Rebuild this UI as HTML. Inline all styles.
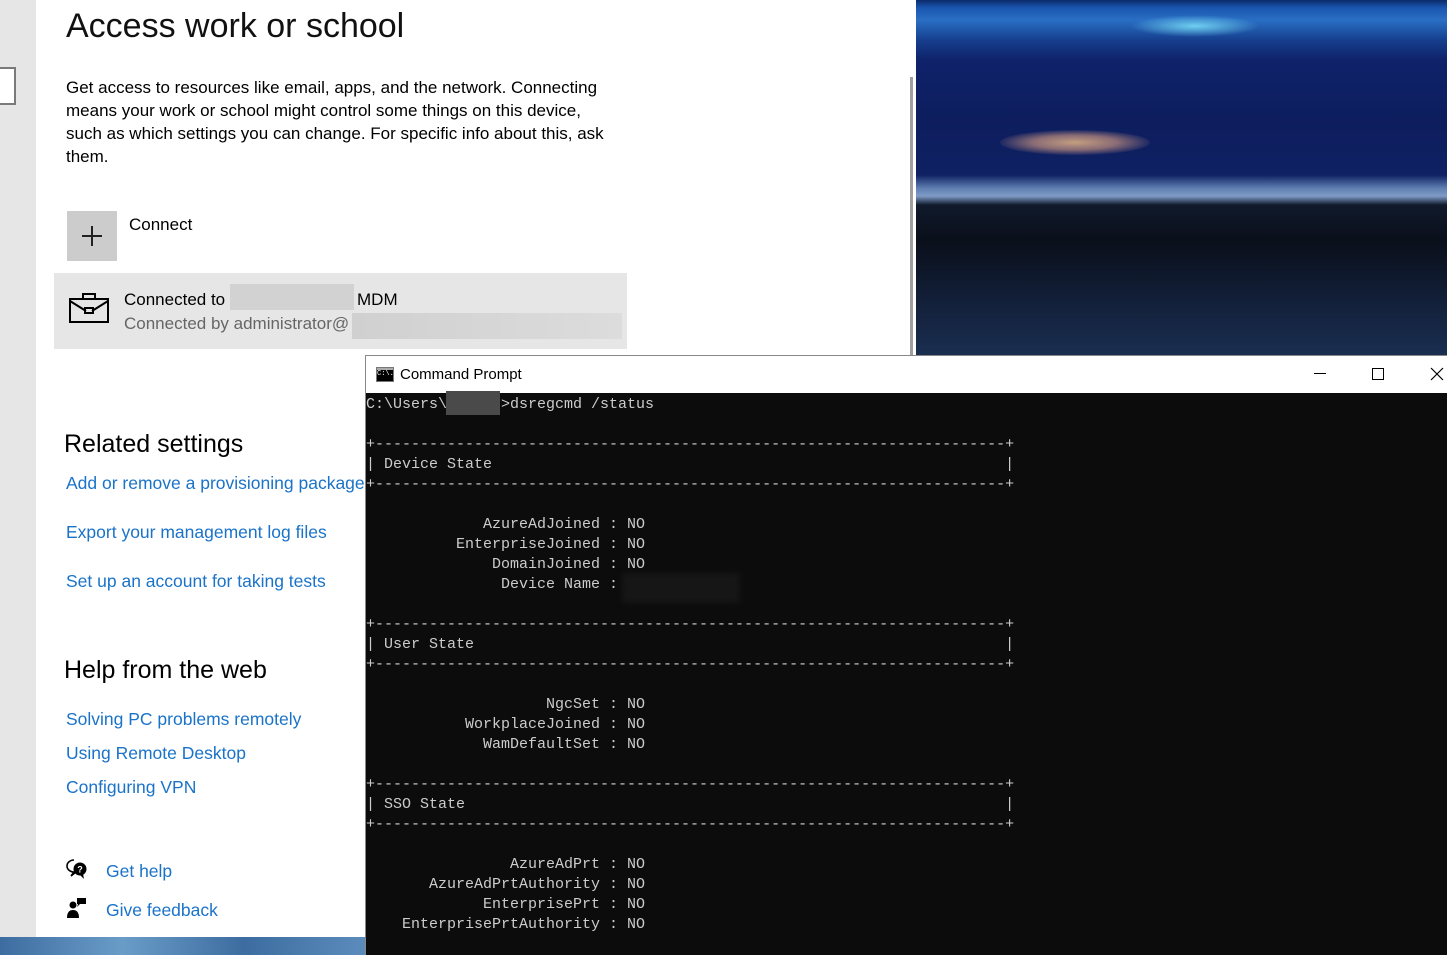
<!DOCTYPE html>
<html><head><meta charset="utf-8"><style>
*{margin:0;padding:0;box-sizing:border-box}
body{width:1447px;height:955px;overflow:hidden;position:relative;background:#fff;font-family:"Liberation Sans",sans-serif}
.abs{position:absolute}
.link{color:#1a73c9;font-size:17.5px;position:absolute;white-space:nowrap}
.mono{font-family:"Liberation Mono",monospace;font-size:15px;line-height:20px;color:#cccccc;white-space:pre}
</style></head><body>
<div class="abs" style="left:0;top:0;width:36px;height:937px;background:#e6e6e6"></div>
<div class="abs" style="left:-10px;top:67px;width:26px;height:38px;border:2px solid #7a7a7a;background:#fff"></div>
<div class="abs" style="left:916px;top:0;width:531px;height:355px;background:
linear-gradient(180deg,#0b2a6a 0,#1a56b0 8px,#2a6fc4 20px,#163f8e 40px,#0f226a 60px,#0d1d5e 120px,#0f2162 175px,#5d7eb0 188px,#7f9cc7 196px,#101a2c 205px,#0a0f1a 240px,#121f38 300px,#1a2e50 355px)"></div>
<div class="abs" style="left:1000px;top:130px;width:150px;height:25px;border-radius:50%;background:radial-gradient(ellipse,#c49e80 0,#8a6c75 40%,rgba(20,35,100,0) 75%)"></div>
<div class="abs" style="left:1130px;top:15px;width:130px;height:22px;border-radius:50%;background:radial-gradient(ellipse,#6fd0f0 0,rgba(40,120,200,0) 70%)"></div>
<div class="abs" style="left:910px;top:77px;width:3px;height:278px;background:#a0a0a0"></div>
<div class="abs" style="left:0;top:937px;width:366px;height:18px;background:linear-gradient(90deg,#3d6da0,#6a9cc8,#3d6da0,#5b8cbc)"></div>

<div class="abs" style="left:66px;top:7px;font-size:34px;color:#111">Access work or school</div>
<div class="abs" style="left:66px;top:76px;width:550px;font-size:17px;line-height:23px;color:#000">Get access to resources like email, apps, and the network. Connecting means your work or school might control some things on this device, such as which settings you can change. For specific info about this, ask them.</div>

<div class="abs" style="left:67px;top:211px;width:50px;height:50px;background:#cccccc"></div>
<div class="abs" style="left:82px;top:235px;width:20px;height:1.5px;background:#222"></div>
<div class="abs" style="left:91px;top:226px;width:1.5px;height:20px;background:#222"></div>
<div class="abs" style="left:129px;top:215px;font-size:17px">Connect</div>

<div class="abs" style="left:54px;top:273px;width:573px;height:76px;background:#e6e6e6"></div>
<svg class="abs" style="left:68px;top:292px" width="44" height="32" viewBox="0 0 44 32"><g fill="none" stroke="#000" stroke-width="2"><rect x="2" y="7" width="38" height="23"/><path d="M15 7V2h12v5M2 9l16 10M40 9 24 19"/><rect x="17" y="16" width="8" height="5"/></g></svg>
<div class="abs" style="left:124px;top:290px;font-size:17px">Connected to</div>
<div class="abs" style="left:230px;top:284px;width:124px;height:26px;background:#d2d2d2"></div>
<div class="abs" style="left:357px;top:290px;font-size:17px">MDM</div>
<div class="abs" style="left:124px;top:314px;font-size:17px;color:#666">Connected by administrator@</div>
<div class="abs" style="left:352px;top:313px;width:270px;height:26px;background:linear-gradient(90deg,#d0d0d0,#dcdcdc)"></div>

<div class="abs" style="left:64px;top:430px;font-size:25px">Related settings</div>
<div class="link" style="left:66px;top:473px">Add or remove a provisioning package</div>
<div class="link" style="left:66px;top:522px">Export your management log files</div>
<div class="link" style="left:66px;top:571px">Set up an account for taking tests</div>
<div class="abs" style="left:64px;top:656px;font-size:25px">Help from the web</div>
<div class="link" style="left:66px;top:709px">Solving PC problems remotely</div>
<div class="link" style="left:66px;top:743px">Using Remote Desktop</div>
<div class="link" style="left:66px;top:777px">Configuring VPN</div>
<svg class="abs" style="left:65px;top:858px" width="24" height="22" viewBox="0 0 24 22"><path d="M9 2a7 6 0 1 0 0 12l-3 4 5-4" fill="none" stroke="#000" stroke-width="1.6"/><circle cx="15" cy="11" r="6.5" fill="#000"/><path d="M15 17l4 4-1-5" fill="#000"/><text x="12.3" y="14.5" font-size="9" fill="#fff" font-family="Liberation Sans" font-weight="bold">?</text></svg>
<div class="link" style="left:106px;top:861px">Get help</div>
<svg class="abs" style="left:66px;top:897px" width="22" height="22" viewBox="0 0 22 22"><circle cx="7" cy="8" r="3.5"/><path d="M1 21c0-6 2.5-8 6-8s6 2 6 8z"/><rect x="11" y="1" width="9" height="6"/><path d="M12 7l-1 3 3-3z"/></svg>
<div class="link" style="left:106px;top:900px">Give feedback</div>

<div class="abs" style="left:365px;top:355px;width:1082px;height:600px;background:#0c0c0c;border-left:1px solid #888"></div>
<div class="abs" style="left:366px;top:355px;width:1081px;height:38px;background:#fff;border-top:1px solid #888"></div>
<div class="abs" style="left:376px;top:367px;width:18px;height:15px;background:#000;border:1px solid #777"><div style="background:#aaa;height:2px"></div><div style="color:#fff;font-size:7px;font-family:Liberation Mono;line-height:9px">C:\.</div></div>
<div class="abs" style="left:400px;top:366px;font-size:15px;color:#000">Command Prompt</div>
<div class="abs" style="left:1314px;top:373px;width:12px;height:1px;background:#000"></div>
<div class="abs" style="left:1372px;top:368px;width:12px;height:12px;border:1px solid #000"></div>
<svg class="abs" style="left:1430px;top:367px" width="14" height="14"><path d="M1 1l12 12M13 1 1 13" stroke="#000" stroke-width="1.2"/></svg>

<div class="abs mono" style="left:366px;top:395px">C:\Users\      >dsregcmd /status

+----------------------------------------------------------------------+
| Device State                                                         |
+----------------------------------------------------------------------+

             AzureAdJoined : NO
          EnterpriseJoined : NO
              DomainJoined : NO
               Device Name :

+----------------------------------------------------------------------+
| User State                                                           |
+----------------------------------------------------------------------+

                    NgcSet : NO
           WorkplaceJoined : NO
             WamDefaultSet : NO

+----------------------------------------------------------------------+
| SSO State                                                            |
+----------------------------------------------------------------------+

                AzureAdPrt : NO
       AzureAdPrtAuthority : NO
             EnterprisePrt : NO
    EnterprisePrtAuthority : NO</div>
<div class="abs" style="left:446px;top:391px;width:54px;height:24px;background:#4a4a4a"></div>
<div class="abs" style="left:622px;top:573px;width:118px;height:30px;background:#161616;filter:blur(3px)"></div>
</body></html>
